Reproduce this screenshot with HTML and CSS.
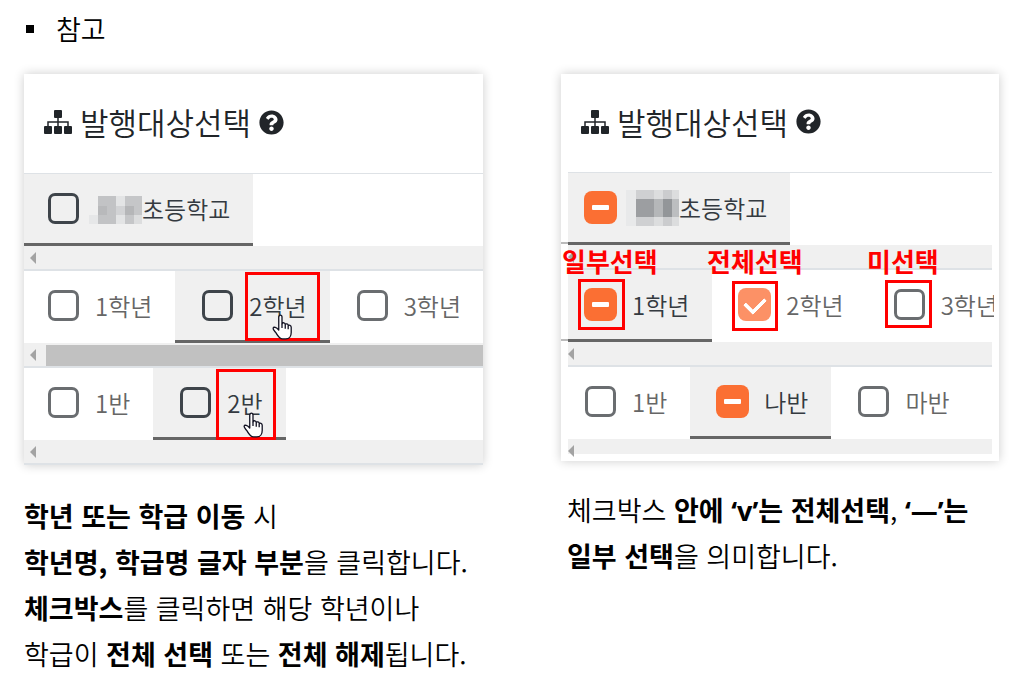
FILE: index.html
```
<!DOCTYPE html>
<html lang="ko">
<head>
  <meta charset="UTF-8" />
  <meta name="viewport" content="width=device-width, initial-scale=1.0" />
  <title>발행대상선택 참고</title>
  <link rel="stylesheet" href="styles.css">
</head>
<body>
  <!-- shared shapes -->
  <svg class="defs" aria-hidden="true">
    <symbol id="sitemap" viewBox="0 0 28 24">
      <path d="M14 7v10M4 17v-5h20v5" fill="none" stroke="currentColor" stroke-width="1.500"/>
      <rect x="10" y="0" width="8" height="8" rx="1"/>
      <rect x="0" y="16" width="8" height="8" rx="1"/>
      <rect x="10" y="16" width="8" height="8" rx="1"/>
      <rect x="20" y="16" width="8" height="8" rx="1"/>
    </symbol>
    <symbol id="help" viewBox="0 0 512 512">
      <path d="M504 256c0 137-111 248-248 248S8 393 8 256C8 119 119 8 256 8s248 111 248 248zM262.700 90c-54.500 0-89.300 23-116.500 63.800-3.600 5.300-2.400 12.400 2.700 16.300l34.700 26.300c5.200 4 12.600 3 16.700-2.100 17.900-22.700 30.100-35.800 57.300-35.800 20.400 0 45.700 13.100 45.700 33 0 15-12.400 22.700-32.500 34C247.100 238.500 216 255 216 296v4c0 6.600 5.400 12 12 12h56c6.600 0 12-5.400 12-12v-1.300c0-28.500 83.200-29.600 83.200-106.700 0-58-60.200-102-116.500-102zM256 338c-25.400 0-46 20.600-46 46s20.600 46 46 46 46-20.600 46-46-20.600-46-46-46z"/>
    </symbol>
    <symbol id="hand" viewBox="0 0 20 24">
      <path d="M7 14V3c0-2.500 3-2.500 3 0v6c.5-1.500 3-1 3 .7.600-1 2.700-.6 2.700 1 .700-.8 2.800-.3 2.800 1.500V17c0 3-1.500 6-5 6h-3c-3 0-4.500-3-6-5.500-1-1.500-3-3-2.700-4.500.5-1.500 3-.8 5.200 1.800z" fill="#fff" stroke="#112" stroke-width="1.200" stroke-linejoin="round"/>
      <path d="M10 9v4M13 10v3.500M15.700 11v3" fill="none" stroke="#112" stroke-width="1.200"/>
    </symbol>
  </svg>

  <header>
    <h1>참고</h1>
  </header>

  <main>
    <!-- --- MOVING BETWEEN GRADES / CLASSES --- -->
    <section>
      <div class="card">
        <h2>
          <svg class="icon-sitemap"><use href="#sitemap"/></svg>
          발행대상선택
          <svg class="icon-help"><use href="#help"/></svg>
        </h2>

        <div class="level">
          <div class="tabs">
            <label class="tab selected">
              <input type="checkbox">
              <svg class="mosaic" viewBox="0 0 53 36">
                <path fill="#e6e7e8" d="M0 24h9v9H0z"/>
                <path fill="#c2c3c5" d="M9 5h18v28H9z"/>
                <path fill="#b8b9bb" d="M9 15h9v9H9z"/>
                <path fill="#e3e4e5" d="M27 5h9v28h-9z"/>
                <path fill="#d2d3d5" d="M27 15h9v9h-9z"/>
                <path fill="#c5c6c8" d="M36 5h17v28H36z"/>
                <path fill="#b5b6b8" d="M36 15h9v9h-9z"/>
                <path fill="#dcddde" d="M45 24h8v9h-8z"/>
              </svg>초등학교
            </label>
          </div>
          <div class="scroll"></div>
        </div>

        <div class="level">
          <div class="tabs">
            <label class="tab"><input type="checkbox">1학년</label>
            <label class="tab selected"><input type="checkbox">2학년</label>
            <label class="tab"><input type="checkbox">3학년</label>
          </div>
          <div class="scroll"><div class="thumb"></div></div>
          <span class="mark mark-grade"></span>
          <svg class="hand hand-grade"><use href="#hand"/></svg>
        </div>

        <div class="level">
          <div class="tabs">
            <label class="tab"><input type="checkbox">1반</label>
            <label class="tab selected"><input type="checkbox">2반</label>
          </div>
          <div class="scroll"></div>
          <span class="mark mark-class"></span>
          <svg class="hand hand-class"><use href="#hand"/></svg>
        </div>
      </div>

      <p>
        <b>학년 또는 학급 이동</b> 시<br>
        <b>학년명, 학급명 글자 부분</b>을 클릭합니다.<br>
        <b>체크박스</b>를 클릭하면 해당 학년이나<br>
        학급이 <b>전체 선택</b> 또는 <b>전체 해제</b>됩니다.
      </p>
    </section>

    <!-- --- CHECKBOX STATES --- -->
    <section class="states">
      <div class="card">
        <h2>
          <svg class="icon-sitemap"><use href="#sitemap"/></svg>
          발행대상선택
          <svg class="icon-help"><use href="#help"/></svg>
        </h2>

        <div class="level edge">
          <div class="tabs">
            <label class="tab selected">
              <input type="checkbox" class="partial">
              <svg class="mosaic" viewBox="0 0 53 36">
                <path fill="#e8e9ea" d="M0 0h10v36H0z"/>
                <path fill="#cfd0d2" d="M10 0h18v36H10z"/>
                <path fill="#dcddde" d="M28 0h9v36h-9z"/>
                <path fill="#cbccce" d="M37 0h9v36h-9z"/>
                <path fill="#dcddde" d="M46 0h7v36h-7z"/>
                <path fill="#9c9ea1" d="M10 9h18v18H10z"/>
                <path fill="#b5b7b9" d="M28 9h9v18h-9z"/>
                <path fill="#939699" d="M37 9h9v18h-9z"/>
                <path fill="#bcbec0" d="M46 9h7v18h-7z"/>
              </svg>초등학교
            </label>
          </div>
          <div class="scroll"></div>
        </div>

        <div class="level edge">
          <div class="tabs">
            <label class="tab selected"><input type="checkbox" class="partial">1학년</label>
            <label class="tab"><input type="checkbox" checked>2학년</label>
            <label class="tab"><input type="checkbox">3학년</label>
          </div>
          <div class="scroll"></div>
          <span class="mark mark-partial"></span>
          <span class="mark mark-all"></span>
          <span class="mark mark-none"></span>
          <strong class="note note-partial">일부선택</strong>
          <strong class="note note-all">전체선택</strong>
          <strong class="note note-none">미선택</strong>
        </div>

        <div class="level">
          <div class="tabs">
            <label class="tab"><input type="checkbox">1반</label>
            <label class="tab selected"><input type="checkbox" class="partial">나반</label>
            <label class="tab"><input type="checkbox">마반</label>
          </div>
          <div class="scroll"></div>
        </div>
      </div>

      <p>
        체크박스 <b>안에 <span class="symbol">‘v’</span>는 전체선택</b>, <b><span class="symbol">‘—’</span>는</b><br>
        <b>일부 선택</b>을 의미합니다.
      </p>
    </section>
  </main>
</body>
</html>
```
FILE: styles.css
```
*{margin:0;padding:0;box-sizing:border-box;}

/* —————— GLOBAL LAYOUT —————— */
body{
  background:#fff;
  color:#000;
  font-family:"Noto Sans CJK KR",sans-serif;
  font-size:27px;
  font-weight:350;
}
.defs{display:none;}
header{padding:9px 24px 0;}
h1{
  display:flex;
  align-items:center;
  gap:22px;
  padding-left:2px;
  font-size:27px;
  font-weight:350;
  line-height:40px;
}
h1::before{
  content:"";
  width:8px;
  height:8px;
  background:#000;
}
main{
  display:grid;
  grid-template-columns:459fr 438fr;
  column-gap:78px;
  padding:25px 30px 0 24px;
}
section{min-width:0;}
p{
  margin-top:28px;
  line-height:46px;
  white-space:nowrap;
}
b{font-weight:700;}
.symbol{
  font-family:"Open Sans",sans-serif;
  line-height:1;
}

/* —————— CARD —————— */
.card{
  background:#fff;
  box-shadow:0 0 10px rgba(0,0,0,0.2);
}
h2{
  display:flex;
  align-items:center;
  gap:8px;
  height:100px;
  padding:0 0 3px 20px;
  border-bottom:1px solid #dee2e6;
  color:#212529;
  font-size:31px;
  font-weight:350;
  line-height:40px;
  white-space:nowrap;
}
h2 svg{fill:currentColor;}
.icon-sitemap{width:28px;height:24px;}
.icon-help{width:25px;height:25px;}

/* —————— TABS —————— */
.level{
  position:relative;
  border-bottom:2px solid #dee2e6;
}
.tabs{
  display:flex;
  overflow:hidden;
}
.tab{
  display:flex;
  flex:none;
  align-items:center;
  height:72px;
  padding:0 23px 0 27px;
  border-bottom:3px solid transparent;
  color:#666;
  font-size:24px;
  line-height:34px;
}
.tab:first-child{padding-left:24px;}
.tab.selected{
  background:#f0f0f0;
  border-bottom-color:#666;
  color:#343a40;
}
.mosaic{
  width:53px;
  height:36px;
  margin-left:-6px;
}
input{
  appearance:none;
  display:flex;
  align-items:center;
  justify-content:center;
  width:31px;
  height:31px;
  margin-right:16px;
  border:3px solid #6a6d70;
  border-radius:7px;
}
.selected input{border-color:#3e444a;}
.selected .partial,
input:checked{
  border-color:#fb6f33;
  background:#fb6f33;
  box-shadow:0 0 0 1px #fb6f33;
}
.partial::before{
  content:"";
  width:17px;
  height:5px;
  border-radius:1px;
  background:#fff;
}
input:checked{
  border-color:#fc9166;
  background:#fc9166;
  box-shadow:0 0 0 1px #fc9166;
}
input:checked::before{
  content:"";
  flex:none;
  width:16px;
  height:10px;
  margin-bottom:4px;
  border:solid #fff;
  border-width:0 0 4px 4px;
  border-radius:1px;
  transform:rotate(-45deg);
}

/* —————— SCROLLBARS —————— */
.scroll{
  display:flex;
  align-items:flex-start;
  height:23px;
  padding-left:6px;
  background:#f0f0f0;
}
.scroll::before{
  content:"";
  margin-top:6px;
  border:6px solid transparent;
  border-left-width:0;
  border-right-color:#a3a3a3;
}
.thumb{
  flex:1;
  height:21px;
  margin:2px 0 0 10px;
  background:#c1c1c1;
}

/* —————— RED MARKS —————— */
.mark{
  position:absolute;
  border:3px solid #f00;
}
.mark-grade{left:221px;top:1px;width:75px;height:69px;}
.mark-class{left:192px;top:1px;width:60px;height:71px;}
.mark-partial{left:10px;top:9px;width:47px;height:51px;}
.mark-all{left:164px;top:11px;width:46px;height:50px;}
.mark-none{left:317px;top:10px;width:47px;height:48px;}
.note{
  position:absolute;
  top:-28px;
  color:#f00;
  font-size:26px;
  font-weight:700;
  line-height:38px;
}
.note-partial{left:-6px;}
.note-all{left:139px;}
.note-none{left:299px;}
.hand{
  position:absolute;
  width:22px;
  height:26px;
}
.hand-grade{left:247px;top:43px;}
.hand-class{left:218px;top:44px;}

/* —————— STATES CARD —————— */
.states .card{padding:0 7px 7px;}
.states h2{
  height:99px;
  padding-left:13px;
}
.states .tabs{margin-right:-2px;}
.states .tab:first-child{padding-left:17px;}
.states .scroll{padding-left:0;}
.edge::before{
  content:"";
  position:absolute;
  left:-7px;
  top:69px;
  width:7px;
  height:2px;
  background:#bbb;
}
.states .level:last-child{border-bottom:0;}
.states .level:last-child .scroll{height:15px;}
.states p{
  margin-top:26px;
  padding-left:6px;
}
```
